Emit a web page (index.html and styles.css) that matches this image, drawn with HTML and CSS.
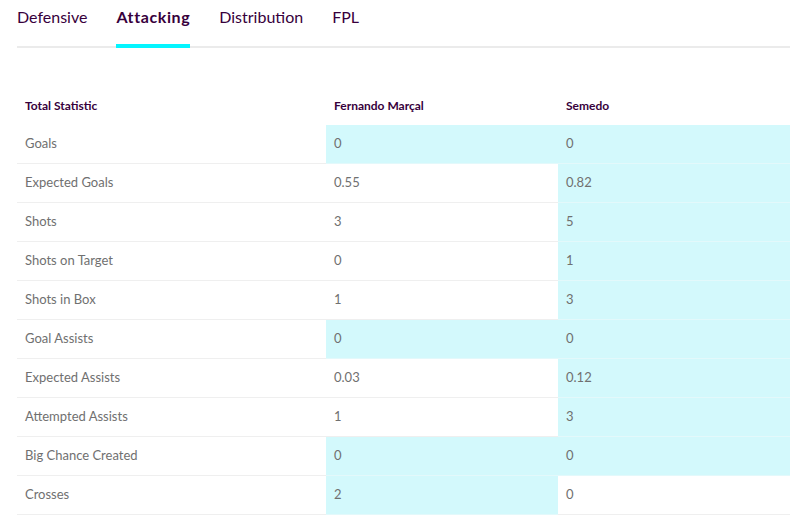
FILE: index.html
```html
<!DOCTYPE html>
<html>
<head>
<meta charset="utf-8">
<link rel="stylesheet" href="styles.css">
</head>
<body>
<div class="page">
  <nav class="tabs">
    <span class="tab">Defensive</span>
    <span class="tab active">Attacking</span>
    <span class="tab">Distribution</span>
    <span class="tab">FPL</span>
  </nav>
  <table class="stats">
    <colgroup><col class="c1"><col class="c2"><col class="c3"></colgroup>
    <thead>
      <tr><th>Total Statistic</th><th>Fernando Marçal</th><th>Semedo</th></tr>
    </thead>
    <tbody>
      <tr><td>Goals</td><td class="hi">0</td><td class="hi">0</td></tr>
      <tr><td>Expected Goals</td><td>0.55</td><td class="hi">0.82</td></tr>
      <tr><td>Shots</td><td>3</td><td class="hi">5</td></tr>
      <tr><td>Shots on Target</td><td>0</td><td class="hi">1</td></tr>
      <tr><td>Shots in Box</td><td>1</td><td class="hi">3</td></tr>
      <tr><td>Goal Assists</td><td class="hi">0</td><td class="hi">0</td></tr>
      <tr><td>Expected Assists</td><td>0.03</td><td class="hi">0.12</td></tr>
      <tr><td>Attempted Assists</td><td>1</td><td class="hi">3</td></tr>
      <tr><td>Big Chance Created</td><td class="hi">0</td><td class="hi">0</td></tr>
      <tr><td>Crosses</td><td class="hi">2</td><td>0</td></tr>
    </tbody>
  </table>
</div>
</body>
</html>
```
FILE: styles.css
```css
html, body {
  margin: 0;
  padding: 0;
  background: #fff;
}
.page {
  padding-left: 17px;
  width: 773px;
  font-family: Lato, "Noto Sans", sans-serif;
}
.tabs {
  display: flex;
  gap: 29px;
  border-bottom: 2px solid #ebebeb;
  height: 46px;
}
.tab {
  font-size: 16px;
  color: #37003c;
  line-height: 20px;
  padding-top: 7px;
  box-sizing: border-box;
  height: 48px;
  border-bottom: 4px solid transparent;
}
.tab.dist {
  letter-spacing: 0.2px;
}
.tab.active {
  font-weight: 700;
  letter-spacing: 0.6px;
  border-bottom-color: #04f5ff;
}
.stats {
  margin-top: 39px;
  width: 773px;
  table-layout: fixed;
  border-collapse: collapse;
}
.c1 { width: 309px; }
.c2 { width: 232px; }
.c3 { width: 232px; }
.stats th {
  text-align: left;
  font-size: 12px;
  font-weight: 700;
  color: #37003c;
  height: 36px;
  padding: 0 8px 2px;
}
.stats td {
  font-size: 13px;
  color: #707070;
  height: 36px;
  padding: 0 8px 2px;
  border-bottom: 1px solid #efefef;
}
.stats td.hi {
  background: #d3f9fc;
  border-bottom-color: #e3f9fb;
}
```
